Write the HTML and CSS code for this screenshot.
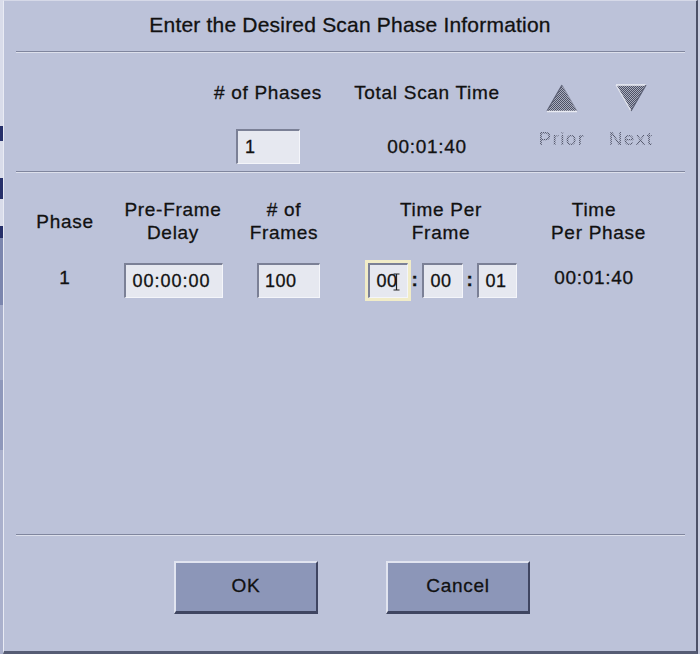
FILE: index.html
```html
<!DOCTYPE html>
<html>
<head>
<meta charset="utf-8">
<title>Scan Phase Information</title>
<link rel="stylesheet" href="styles.css">
</head>
<body>
<div class="screen">
  <div class="behind"></div>
  <div class="dialog">
    <div class="title">Enter the Desired Scan Phase Information</div>
    <div class="sep"></div>
    <div class="summary">
      <div class="scol c-phases">
        <div class="lbl">#&nbsp;of Phases</div>
        <div class="field f-phases">1</div>
      </div>
      <div class="scol c-total">
        <div class="lbl">Total Scan Time</div>
        <div class="val v-total">00:01:40</div>
      </div>
      <div class="scol c-prior">
        <svg class="tri" width="32" height="29" viewBox="0 0 32 29">
          <defs>
            <pattern id="dots" width="2" height="2" patternUnits="userSpaceOnUse">
              <rect width="2" height="2" fill="#a9adbf"/>
              <rect width="1" height="1" fill="#4d5164"/>
              <rect x="1" y="1" width="1" height="1" fill="#4d5164"/>
            </pattern>
          </defs>
          <polygon points="16,1 31,27 1,27" fill="url(#dots)"/>
          <line x1="16" y1="1" x2="1" y2="27" stroke="#5a5e73" stroke-width="1.2"/>
          <line x1="16" y1="1" x2="31" y2="27" stroke="#8d91a6" stroke-width="1"/>
          <line x1="1" y1="27.5" x2="31" y2="27.5" stroke="#e9ebf3" stroke-width="1.5"/>
        </svg>
        <div class="dis">Prior</div>
      </div>
      <div class="scol c-next">
        <svg class="tri" width="32" height="29" viewBox="0 0 32 29">
          <polygon points="1,1 31,1 16,27" fill="url(#dots)"/>
          <line x1="1" y1="1" x2="31" y2="1" stroke="#eceef5" stroke-width="1.5"/>
          <line x1="1" y1="1" x2="16" y2="27" stroke="#e4e6ef" stroke-width="1.2"/>
          <line x1="31" y1="1" x2="16" y2="27" stroke="#5a5e73" stroke-width="1.2"/>
        </svg>
        <div class="dis">Next</div>
      </div>
    </div>
    <div class="sep"></div>
    <div class="table">
      <div class="th">Phase</div>
      <div class="th">Pre-Frame<br>Delay</div>
      <div class="th">#&nbsp;of<br>Frames</div>
      <div class="th">Time Per<br>Frame</div>
      <div class="th">Time<br>Per Phase</div>

      <div class="td txt">1</div>
      <div class="td"><div class="field f-delay">00:00:00</div></div>
      <div class="td"><div class="field f-frames">100</div></div>
      <div class="td">
        <div class="timegroup">
          <div class="field f-time focused">00<svg class="ibeam" width="7" height="18" viewBox="0 0 7 18"><path d="M0.5 1H6.5M3.5 1V17M0.5 17H6.5" stroke="#222" stroke-width="1.2" fill="none"/></svg></div>
          <span class="colon">:</span>
          <div class="field f-time f-mid">00</div>
          <span class="colon">:</span>
          <div class="field f-time">01</div>
        </div>
      </div>
      <div class="td txt">00:01:40</div>
    </div>
    <div class="spacer"></div>
    <div class="sep"></div>
    <div class="buttons">
      <button class="btn">OK</button>
      <button class="btn">Cancel</button>
    </div>
  </div>
  <div class="rest"></div>
</div>
</body>
</html>
```

FILE: styles.css
```css
* {
  box-sizing: border-box;
  margin: 0;
  padding: 0;
}

html, body {
  width: 700px;
  height: 654px;
  overflow: hidden;
}

body {
  background: #c3c8dc;
  font-family: "Liberation Sans", Arial, sans-serif;
  color: #111;
  -webkit-text-stroke: 0.3px #111;
}

.screen {
  display: flex;
  height: 654px;
}

.behind {
  width: 3px;
  flex: none;
  background: linear-gradient(to bottom,
    #d9dcea 0, #d9dcea 126px,
    #27306a 126px, #27306a 141px,
    #d9dcea 141px, #d9dcea 178px,
    #27306a 178px, #27306a 199px,
    #d9dcea 199px, #d9dcea 226px,
    #27306a 226px, #27306a 238px,
    #7c86ae 238px, #7c86ae 305px,
    #a3aac8 305px, #a3aac8 380px,
    #8f98bb 380px, #8f98bb 450px,
    #aab0cc 450px, #aab0cc 654px);
}

.dialog {
  width: 695px;
  height: 654px;
  flex: none;
  background: #bcc2d9;
  border-top: 1px solid #d6d9e8;
  border-left: 1px solid #e9ebf4;
  border-right: 2px solid #4c5168;
  border-bottom: 3px solid #565c74;
  display: flex;
  flex-direction: column;
}

.rest {
  flex: 1;
  background: #c9cde0;
}

.title {
  height: 50px;
  padding-bottom: 3px;
  display: flex;
  align-items: center;
  justify-content: center;
  font-size: 21px;
  letter-spacing: 0.2px;
}

.sep {
  height: 2px;
  flex: none;
  margin: 0 11px 0 12px;
  border-top: 1px solid #80869e;
  border-bottom: 1px solid #dde0ec;
}

/* summary */
.summary {
  height: 118px;
  flex: none;
  display: flex;
  padding: 28px 0 0 204px;
}

.scol {
  display: flex;
  flex-direction: column;
  align-items: center;
}

.c-phases { width: 120px; }
.c-total { width: 150px; margin-left: 24px; }
.c-prior { width: 60px; margin-left: 30px; }
.c-next { width: 60px; margin-left: 9px; }

.lbl {
  font-size: 19px;
  line-height: 24px;
  letter-spacing: 0.7px;
  white-space: nowrap;
}

.val {
  font-size: 19px;
  line-height: 24px;
  letter-spacing: 0.7px;
}

.v-total {
  margin-top: 30px;
}

.tri {
  display: block;
  margin-top: 3px;
}

.dis {
  margin-top: 15px;
  font-size: 19px;
  line-height: 22px;
  letter-spacing: 1.4px;
  color: transparent;
  -webkit-text-stroke: 0;
  background: repeating-conic-gradient(#565a70 0 25%, #b3b8cc 0 50%) 0 0 / 2px 2px;
  -webkit-background-clip: text;
  background-clip: text;
}

/* fields */
.field {
  height: 35px;
  display: flex;
  align-items: center;
  background: #e6e8f0;
  border-top: 2px solid #7b8096;
  border-left: 2px solid #7b8096;
  border-bottom: 1px solid #f4f5fa;
  border-right: 1px solid #f4f5fa;
  font-size: 18px;
  letter-spacing: 0.5px;
  color: #111;
}

.f-phases {
  width: 64px;
  margin-top: 24px;
  padding-left: 7px;
}

.f-delay {
  width: 99px;
  padding-left: 7px;
  letter-spacing: 1px;
}

.f-frames {
  width: 63px;
  padding-left: 6px;
  margin-left: 9px;
}

/* table */
.table {
  flex: none;
  display: grid;
  grid-template-columns: 88px 128px 94px 220px 86px;
  grid-template-rows: 46px 35px;
  row-gap: 19px;
  padding: 25px 0 0 17px;
}

.th {
  font-size: 19px;
  line-height: 23px;
  letter-spacing: 0.7px;
  text-align: center;
  align-self: center;
  white-space: nowrap;
}

.td {
  display: flex;
  align-items: center;
  justify-content: center;
}

.td.txt {
  font-size: 19px;
  letter-spacing: 0.7px;
  padding-bottom: 6px;
  white-space: nowrap;
}

.timegroup {
  display: flex;
  align-items: center;
  gap: 4px;
  margin-left: 2px;
}

.f-time {
  width: 40px;
  padding-left: 7px;
}

.f-mid {
  width: 41px;
}

.focused {
  box-shadow: 0 0 0 3px #f1ecc8;
}

.ibeam {
  display: block;
  margin-left: -5px;
  margin-top: 1px;
}

.colon {
  width: 6px;
  text-align: center;
  font-size: 19px;
  font-weight: bold;
  padding-bottom: 2px;
}

.spacer {
  flex: 1;
}

/* buttons */
.buttons {
  height: 115px;
  flex: none;
  display: flex;
  justify-content: center;
  align-items: flex-start;
  gap: 68px;
  padding-top: 25px;
  padding-left: 4px;
}

.btn {
  width: 144px;
  height: 53px;
  background: #8c96b8;
  border-top: 2px solid #e1e4f0;
  border-left: 2px solid #e1e4f0;
  border-right: 2px solid #3f4561;
  border-bottom: 3px solid #3f4561;
  font-family: "Liberation Sans", Arial, sans-serif;
  font-size: 19px;
  letter-spacing: 0.7px;
  color: #111;
  -webkit-text-stroke: 0.3px #111;
  padding-bottom: 2px;
}
```
